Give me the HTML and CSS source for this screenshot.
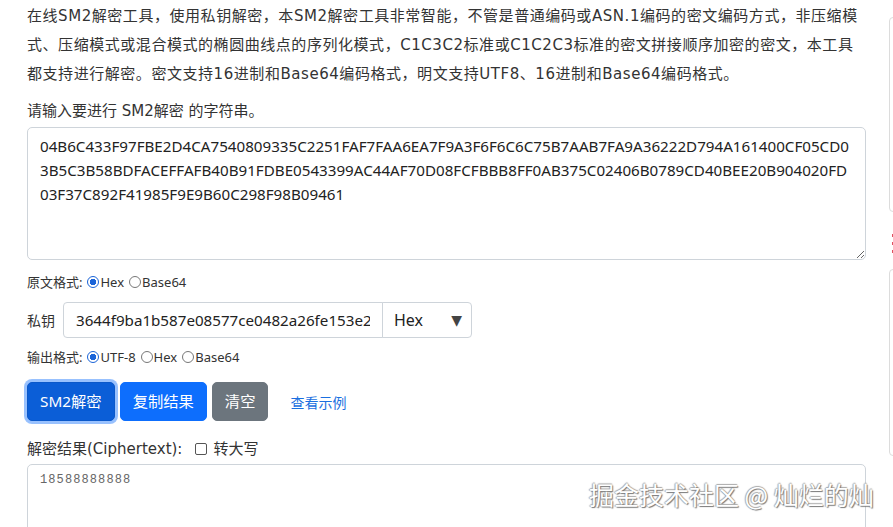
FILE: index.html
```html
<!DOCTYPE html>
<html lang="zh-CN">
<head>
<meta charset="utf-8">
<title>SM2解密</title>
<link rel="stylesheet" href="styles.css">
</head>
<body>
<div class="page">
  <main class="main">
    <p class="intro">在线SM2解密工具，使用私钥解密，本SM2解密工具非常智能，不管是普通编码或ASN.1编码的密文编码方式，非压缩模式、压缩模式或混合模式的椭圆曲线点的序列化模式，C1C3C2标准或C1C2C3标准的密文拼接顺序加密的密文，本工具都支持进行解密。密文支持16进制和Base64编码格式，明文支持UTF8、16进制和Base64编码格式。</p>
    <div class="prompt">请输入要进行 SM2解密 的字符串。</div>
    <textarea class="cipher">04B6C433F97FBE2D4CA7540809335C2251FAF7FAA6EA7F9A3F6F6C6C75B7AAB7FA9A36222D794A161400CF05CD03B5C3B58BDFACEFFAFB40B91FDBE0543399AC44AF70D08FCFBBB8FF0AB375C02406B0789CD40BEE20B904020FD03F37C892F41985F9E9B60C298F98B09461</textarea>
    <div class="radio-row">
      <span class="rlabel">原文格式:</span>
      <label class="opt"><span class="radio on"></span>Hex</label>
      <label class="opt"><span class="radio"></span>Base64</label>
    </div>
    <div class="key-row">
      <span class="key-label">私钥</span>
      <div class="input-group">
        <input class="key-input" type="text" value="3644f9ba1b587e08577ce0482a26fe153e2">
        <div class="key-select"><span>Hex</span><span class="caret">▼</span></div>
      </div>
    </div>
    <div class="radio-row out">
      <span class="rlabel">输出格式:</span>
      <label class="opt"><span class="radio on"></span>UTF-8</label>
      <label class="opt"><span class="radio"></span>Hex</label>
      <label class="opt"><span class="radio"></span>Base64</label>
    </div>
    <div class="btn-row">
      <button class="btn btn-primary focus">SM2解密</button>
      <button class="btn btn-primary">复制结果</button>
      <button class="btn btn-gray">清空</button>
      <a class="link" href="#">查看示例</a>
    </div>
    <div class="result-label">
      <span>解密结果(Ciphertext):</span>
      <label class="chk"><span class="box"></span>转大写</label>
    </div>
    <div class="result">18588888888</div>
  </main>
  <aside class="side">
    <div class="card c1"></div>
    <div class="marks"><i></i><i></i><i></i></div>
    <div class="card c2"></div>
  </aside>
</div>
<div class="watermark">掘金技术社区 @ 灿烂的灿</div>
</body>
</html>
```
FILE: styles.css
```css
html, body {
  margin: 0;
  padding: 0;
  overflow: hidden;
  background: #fff;
}
body {
  font-family: "DejaVu Sans", "Noto Sans CJK SC", sans-serif;
  color: #333;
  width: 893px;
  height: 527px;
  position: relative;
}
.page {
  display: flex;
  padding-left: 27px;
}
.main {
  width: 839px;
  flex: none;
}
.intro {
  margin: 2px 0 0;
  font-size: 15px;
  letter-spacing: 0.55px;
  line-height: 29px;
  color: #333;
}
.prompt {
  margin-top: 11px;
  font-size: 15px;
  line-height: 22px;
}
.cipher {
  display: block;
  box-sizing: border-box;
  width: 839px;
  height: 133px;
  margin-top: 5px;
  padding: 6px 12px;
  border: 1px solid #ced4da;
  border-radius: 5px;
  font-family: "Noto Sans", "Noto Sans CJK SC", sans-serif;
  font-size: 15.17px;
  line-height: 24px;
  color: #222;
  word-break: break-all;
  resize: vertical;
  outline: none;
}
.radio-row {
  display: flex;
  align-items: center;
  margin-top: 12px;
  font-family: "Noto Sans", "Noto Sans CJK SC", sans-serif;
  font-size: 13px;
  line-height: 20px;
  color: #333;
}
.radio-row.out { margin-top: 9px; }
.rlabel { margin-right: 5px; }
.opt {
  display: inline-flex;
  align-items: center;
  margin-right: 5px;
}
.radio {
  box-sizing: border-box;
  width: 12px;
  height: 12px;
  border: 1px solid #777;
  border-radius: 50%;
  margin-right: 1px;
}
.radio.on {
  border: 1px solid #1a64d8;
  background: radial-gradient(circle, #1a64d8 0 3px, #fff 3.5px);
}
.key-row {
  display: flex;
  align-items: center;
  margin-top: 10px;
}
.key-label {
  font-family: "Noto Sans CJK SC", sans-serif;
  font-size: 14px;
  width: 36px;
  color: #333;
}
.input-group {
  display: flex;
  height: 36px;
}
.key-input {
  box-sizing: border-box;
  width: 320px;
  height: 36px;
  padding: 0 12px;
  border: 1px solid #ced4da;
  border-radius: 4px 0 0 4px;
  font-family: "Noto Sans", "Noto Sans CJK SC", sans-serif;
  font-size: 15.17px;
  color: #222;
  outline: none;
}
.key-select {
  box-sizing: border-box;
  width: 90px;
  height: 36px;
  margin-left: -1px;
  padding: 0 9px 0 11px;
  border: 1px solid #ced4da;
  border-radius: 0 4px 4px 0;
  display: flex;
  align-items: center;
  justify-content: space-between;
  font-family: "Noto Sans", sans-serif;
  font-size: 16px;
  color: #222;
}
.caret {
  font-family: "DejaVu Sans", sans-serif;
  font-size: 14px;
  color: #444;
}
.btn-row {
  display: flex;
  align-items: center;
  margin-top: 15px;
}
.btn {
  font-family: "Noto Sans", "Noto Sans CJK SC", sans-serif;
  font-size: 15.3px;
  line-height: 23px;
  padding: 7px 12px;
  border: 1px solid transparent;
  border-radius: 5px;
  color: #fff;
  margin-right: 5px;
  cursor: pointer;
}
.btn-primary { background: #0d6efd; border-color: #0d6efd; }
.btn-primary.focus {
  background: #0b5ed7;
  border-color: #0a58ca;
  box-shadow: 0 0 0 3px rgba(49, 132, 253, 0.5);
}
.btn-gray { background: #6c757d; border-color: #6c757d; }
.link {
  margin-left: 17px;
  font-family: "Noto Sans CJK SC", sans-serif;
  font-size: 14px;
  color: #1a6fe0;
  text-decoration: none;
}
.result-label {
  display: flex;
  align-items: center;
  margin-top: 17px;
  font-size: 15px;
  line-height: 22px;
  color: #333;
}
.chk {
  display: inline-flex;
  align-items: center;
  margin-left: 13px;
}
.box {
  box-sizing: border-box;
  width: 12px;
  height: 12px;
  border: 1px solid #555;
  border-radius: 2px;
  margin-right: 6px;
}
.result {
  box-sizing: border-box;
  width: 839px;
  height: 120px;
  margin-top: 4px;
  padding: 8px 12px;
  border: 1px solid #ced4da;
  border-radius: 5px;
  font-family: "Liberation Mono", "DejaVu Sans Mono", monospace;
  font-size: 12px;
  letter-spacing: 1.1px;
  color: #666;
}
.side {
  margin-left: 23px;
  width: 200px;
  flex: none;
}
.card {
  border: 1px solid #dcdcdc;
  border-radius: 4px;
}
.c1 { margin-top: 17px; height: 193px; }
.c2 { margin-top: 16px; height: 185px; }
.marks {
  margin-top: 22px;
  margin-left: 3px;
  display: flex;
  flex-direction: column;
  gap: 5px;
}
.marks i {
  display: block;
  width: 2px;
  height: 3px;
  background: #e05060;
}
.watermark {
  position: absolute;
  left: 589px;
  top: 478px;
  font-family: "Noto Sans CJK SC", sans-serif;
  font-size: 25px;
  line-height: 32px;
  color: #fff;
  text-shadow: 1px 1px 1px #777, -1px 0 1px #aaa, 0 -1px 1px #aaa;
  white-space: nowrap;
}
```
